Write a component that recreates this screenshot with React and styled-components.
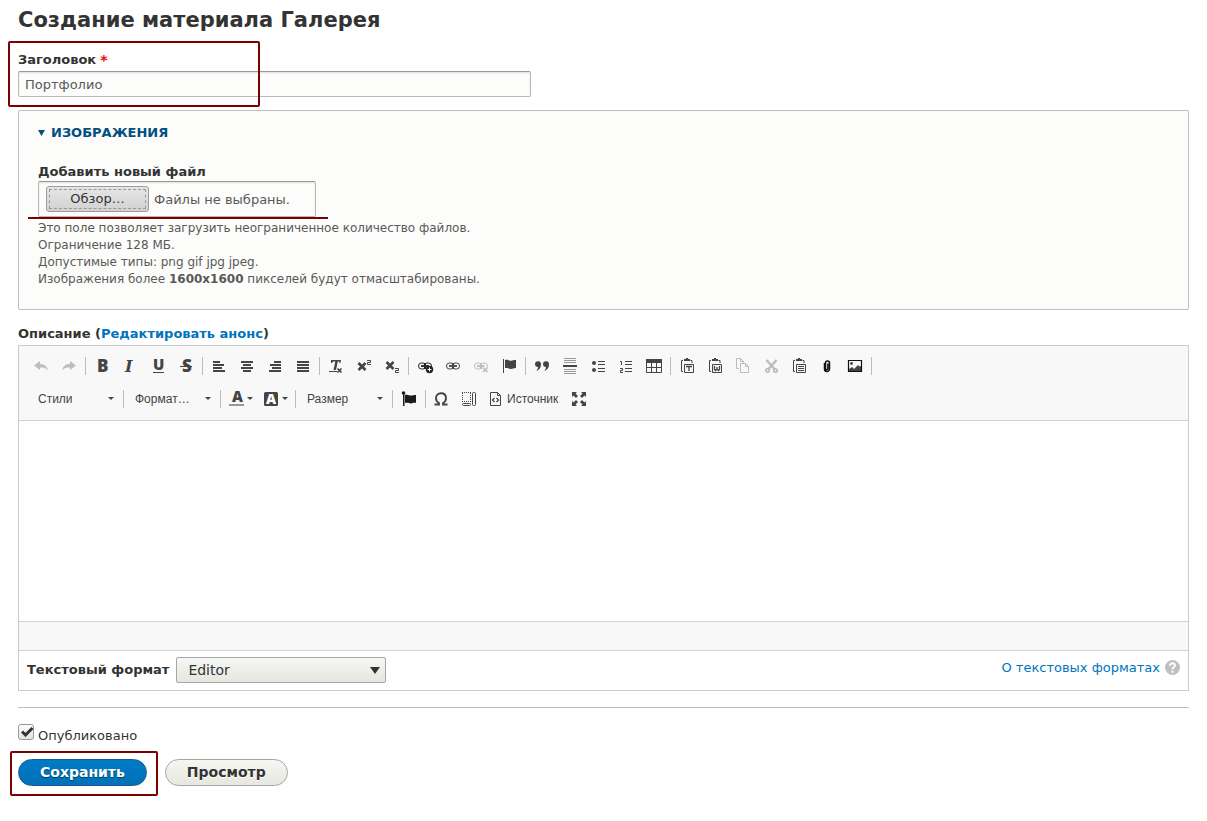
import React, { useState } from "react";
import styled, { createGlobalStyle, css } from "styled-components";

const GlobalStyle = createGlobalStyle`
  *,
  *::after {
    box-sizing: border-box;
  }

  body {
    margin: 0;
    background: #fff;
    color: #333;
    font-family: "DejaVu Sans", sans-serif;
    font-size: 13px;
  }

  button, input, select, textarea {
    font-family: inherit;
  }
`;

// --- Page ---
const Page = styled.main`
  padding: 7px 18px 34px;
`;

const Title = styled.h1`
  margin: 0 0 26px;
  font-size: 21px;
  line-height: 26px;
`;

// dark red frame laid over the part of the form to look at
const mark = css`
  content: "";
  position: absolute;
  border: 2px solid #7b0000;
  border-radius: 2px;
  pointer-events: none;
`;

// --- Title field ---
const TitleField = styled.div`
  position: relative;
  margin-bottom: 13px;

  &::after {
    ${mark}
    top: -18px;
    left: -10px;
    width: 252px;
    height: 66px;
  }
`;

const Label = styled.label`
  display: block;
  width: fit-content;
  font-weight: bold;
  line-height: 18px;
`;

const TitleLabel = styled(Label)`
  display: flex;
  gap: 4px;
  height: 12px;
  line-height: 2px;
`;

const Required = styled.span`
  color: #e00;
  font-size: 14px;
`;

const TextInput = styled.input`
  display: block;
  width: 513px;
  max-width: 100%;
  height: 26px;
  padding: 0 6px;
  border: 1px solid #b8b8b8;
  border-top-color: #999;
  border-radius: 2px;
  background: #fcfcfa;
  box-shadow: inset 0 1px 2px rgba(0, 0, 0, 0.12);
  color: #595959;
  font-size: 13px;
`;

// --- Images ---
const Details = styled.details`
  padding: 12px 19px 21px;
  border: 1px solid #bfbfbf;
  border-radius: 2px;
  background: #fcfcfa;
`;

const Summary = styled.summary`
  display: flex;
  align-items: center;
  gap: 6px;
  margin-bottom: 20px;
  color: #004f80;
  font-weight: bold;
  line-height: 20px;
  text-transform: uppercase;
  cursor: pointer;

  svg {
    width: 7px;
    height: 6px;
    fill: currentColor;
  }
`;

const FileField = styled.div`
  position: relative;
  width: fit-content;

  &::after {
    ${mark}
    right: -12px;
    bottom: -2px;
    left: -10px;
    border-width: 2px 0 0;
    border-radius: 0;
  }
`;

const FileBox = styled.label`
  display: flex;
  align-items: center;
  gap: 5px;
  width: 278px;
  height: 36px;
  padding: 0 7px;
  border: 1px solid #b8b8b8;
  border-top-color: #999;
  border-radius: 2px;
  box-shadow: inset 0 1px 2px rgba(0, 0, 0, 0.12);
  color: #595959;

  input {
    position: absolute;
    opacity: 0;
    width: 1px;
  }
`;

const FileButton = styled.span`
  width: 103px;
  height: 26px;
  padding: 2px;
  border: 1px solid #9d9d9d;
  border-radius: 3px;
  background: linear-gradient(#e6e6e6, #d2d2d2);
  color: #333;
  line-height: 18px;
  text-align: center;

  span {
    display: block;
    border: 1px dashed #999;
  }
`;

const Description = styled.p`
  margin: 3px 0 0;
  color: #595959;
  font-size: 12px;
  line-height: 17px;
`;

// --- Editor ---
const EditorLabel = styled.div`
  margin: 15px 0 2px;
  font-weight: bold;
  line-height: 18px;
`;

const Link = styled.a`
  color: #0074bd;
  text-decoration: none;
`;

const Editor = styled.section`
  border: 1px solid #ccc;
`;

const Toolbar = styled.div`
  padding: 3px 8px 5px;
  border-bottom: 1px solid #d1d1d1;
  background: #f8f8f8;
`;

const ToolRow = styled.div`
  display: flex;
  align-items: center;
  height: 33px;
  padding-left: ${({ $indent }) => ($indent ? "2px" : "0")};
`;

const Separator = styled.span`
  width: 1px;
  height: 18px;
  margin: 0 2px;
  background: #bcbcbc;
`;

const ToolButton = styled.button`
  display: flex;
  align-items: center;
  gap: 1px;
  height: 25px;
  padding: 0 ${({ $menu }) => ($menu ? "5px" : "6px")} 0 6px;
  border: 0;
  background: none;
  color: ${({ disabled }) => (disabled ? "#bdbdbd" : "#444")};
  font: 12px "Liberation Sans", Arial, sans-serif;
  cursor: pointer;
`;

const Combo = styled(ToolButton)`
  justify-content: space-between;
  width: 92px;
  padding: 0 7px 0 9px;
`;

const Icon = styled.svg`
  flex: none;
  width: 16px;
  height: 16px;
  fill: currentColor;
  overflow: visible;
`;

const Arrow = styled.span`
  margin-left: 1px;
  border: 3px solid transparent;
  border-top-color: #444;
  border-bottom: 0;
`;

const Content = styled.textarea`
  display: block;
  width: 100%;
  height: 200px;
  padding: 20px;
  border: 0;
  outline: 0;
  resize: none;
  font-size: 13px;
`;

const BottomBar = styled.div`
  height: 30px;
  border: solid #d1d1d1;
  border-width: 1px 0;
  background: #f8f8f8;
`;

const FormatRow = styled.div`
  display: flex;
  align-items: center;
  gap: 7px;
  padding: 6px 8px 7px;
`;

const SelectWrap = styled.div`
  position: relative;

  svg {
    position: absolute;
    top: 10px;
    right: 6px;
    width: 10px;
    height: 7px;
    fill: #333;
    pointer-events: none;
  }
`;

const Select = styled.select`
  display: block;
  appearance: none;
  width: 210px;
  height: 26px;
  padding: 0 24px 0 11px;
  border: 1px solid #a6a6a6;
  border-radius: 2px;
  background: linear-gradient(#f6f6f3, #e7e7df);
  color: #333;
  font-size: 14px;
`;

const HelpLink = styled(Link)`
  display: flex;
  align-items: center;
  gap: 5px;
  height: 20px;
  margin: 0 0 6px auto;

  svg {
    width: 15px;
    height: 15px;
  }
`;

// --- Actions ---
const Divider = styled.hr`
  height: 1px;
  margin: 16px 0;
  border: 0;
  background: #bfbfbf;
`;

const CheckRow = styled.label`
  display: flex;
  align-items: flex-start;
  gap: 4px;
  position: relative;
  width: fit-content;
  line-height: 24px;

  input {
    appearance: none;
    width: 16px;
    height: 16px;
    margin: 0;
    border: 1px solid #999;
    border-radius: 3px;
    background: linear-gradient(#fff, #e2e2e2);
  }

  svg {
    position: absolute;
    top: 2px;
    left: 3px;
    width: 13px;
    height: 11px;
    visibility: hidden;
  }

  input:checked + svg {
    visibility: visible;
  }
`;

const Actions = styled.div`
  display: flex;
  gap: 18px;
  margin-top: 11px;
`;

const SaveMark = styled.div`
  position: relative;

  &::after {
    ${mark}
    top: -8px;
    right: -11px;
    bottom: -10px;
    left: -8px;
  }
`;

const Button = styled.button`
  display: block;
  height: 27px;
  padding: 0 21px 2px;
  border: 1px solid ${({ $primary }) => ($primary ? "#1e5c90" : "#a6a6a6")};
  border-radius: 14px;
  background: ${({ $primary }) =>
    $primary
      ? "linear-gradient(#007bc6, #0071b8)"
      : "linear-gradient(#f6f6f3, #e7e7df)"};
  color: ${({ $primary }) => ($primary ? "#fff" : "#333")};
  text-shadow: ${({ $primary }) =>
    $primary ? "0 1px 1px rgba(0, 0, 0, 0.5)" : "0 1px #fff"};
  font-size: 14px;
  font-weight: bold;
  cursor: pointer;
`;

// --- Toolbar drawings, each in a 16 x 16 box ---
const sans = { fontFamily: "Open Sans, sans-serif", fontWeight: 800 };
const line = { fill: "none", stroke: "currentColor" };

const bars = (rows) => rows.map(([x, w], i) => <rect key={i} x={x} y={3 + i * 3} width={w} height="2" />);

const chain = (
  <>
    <rect x="1.5" y="5" width="7.500" height="6" rx="3" {...line} />
    <rect x="7" y="5" width="7.500" height="6" rx="3" {...line} />
    <path d="M4 8h8" {...line} strokeWidth="1.800" />
  </>
);

const clipboard = (
  <>
    <path d="M4 2.500H2.500v11H4M11.500 2.500h1.500V5" {...line} />
    <path d="M5 3V1h2V0h2v1h2v2z" />
    <path d="M5.500 6.500h9v8h-9z" {...line} />
  </>
);

const icons = {
  undo: <path d="M1 7.500 7 3v3c4 0 7 2 8 6.500-2-2.500-4.500-3-8-3v2.500z" />,
  redo: <path d="M15 7.500 9 3v3c-4 0-7 2-8 6.500 2-2.500 4.500-3 8-3v2.500z" />,
  bold: <text x="3" y="14" fontSize="17" {...sans}>B</text>,
  italic: <text x="3" y="14" fontSize="16" fontFamily="DejaVu Serif, serif" fontStyle="italic" fontWeight="700">I</text>,
  underline: (
    <>
      <text x="3" y="12" fontSize="15" {...sans}>U</text>
      <path d="M3 14h11v1H3z" />
    </>
  ),
  strike: (
    <>
      <text x="4" y="14" fontSize="17" {...sans}>S</text>
      <path d="M2 8h12v1H2z" />
    </>
  ),
  left: bars([[2, 7], [2, 11], [2, 9], [2, 12]]),
  center: bars([[2, 12], [4, 8], [2, 12], [4, 8]]),
  right: bars([[7, 7], [3, 11], [5, 9], [2, 12]]),
  justify: bars([[2, 12], [2, 12], [2, 12], [2, 12]]),
  clear: (
    <>
      <path d="M3 2h10l-.5 3h-1l-.2-1.500H9.800L8 12H5.500l1.800-8.500H5L4 5H3zM1 13h8v1H1z" />
      <path d="m9.500 10.500 4 4m0-4-4 4" {...line} strokeWidth="1.700" />
    </>
  ),
  sup: (
    <>
      <path d="m2.500 5 7 7m0-7-7 7" {...line} strokeWidth="2.600" />
      <path d="M11 2.500h3.500v2h-3v2H15" {...line} />
    </>
  ),
  sub: (
    <>
      <path d="m2.500 4 7 7m0-7-7 7" {...line} strokeWidth="2.600" />
      <path d="M11 10.500h3.500v2h-3v2H15" {...line} />
    </>
  ),
  linkAdd: (
    <g color="#222">
      {chain}
      <circle cx="12.500" cy="11.500" r="3.700" />
      <path d="M12.500 9.500v4M10.500 11.500h4" stroke="#fff" />
    </g>
  ),
  link: chain,
  unlink: (
    <>
      {chain}
      <path d="m10 9.500 5 5m0-5-5 5" stroke="#f8f8f8" strokeWidth="4" />
      <path d="m10 9.500 4.500 4.500m0-4.500L10 14" {...line} strokeWidth="1.700" />
    </>
  ),
  flag: <path d="M2 1h1v14H2zM4 2c3-1 4 1 6 .7 2-.4 2-.7 5-.7v8c-3 0-3 .8-5 1-2-.1-3-1.500-6-1z" />,
  quote: (
    <path d="M1 6a3 3 0 1 1 6 .5C7 10 5 12 2 13c1.500-1.500 2-2.500 2-4a3 3 0 0 1-3-3zM9 6a3 3 0 1 1 6 .5c0 3.500-2 5.500-5 6.500 1.500-1.500 2-2.500 2-4a3 3 0 0 1-3-3z" />
  ),
  rule: (
    <>
      <path d="M2 .5h12M2 2.500h12M2 4.500h12M2 11.500h12M2 13.500h12M2 15.500h12" stroke="#999" />
      <path d="M1 7h14v2H1z" />
    </>
  ),
  bullets: (
    <>
      <circle cx="4" cy="5" r="2" />
      <circle cx="4" cy="12" r="2" />
      <path d="M8 3.500h7M8 6.500h7M8 10.500h7M8 13.500h7" {...line} />
    </>
  ),
  numbers: (
    <>
      <path d="M7 3.500h7M7 6.500h7M7 10.500h7M7 13.500h7" {...line} />
      <path d="M2 3.500h1.500V7M2 10.500h2.500v2h-2v2H5" {...line} />
    </>
  ),
  table: (
    <>
      <path d="M0 1h16v4H0z" />
      <path d="M.5 4v10.500h15V4M5.500 4v10M10.500 4v10M0 9.500h16" {...line} />
    </>
  ),
  pasteText: (
    <>
      {clipboard}
      <path d="M7 8.500h6M10 8v5" {...line} strokeWidth="1.300" />
    </>
  ),
  pasteWord: (
    <>
      {clipboard}
      <path d="M7.500 8v3.500l1 1 1.500-1.500 1.500 1.500 1-1V8M10 9v2.500" {...line} strokeWidth="1.300" />
    </>
  ),
  copy: <path d="M4 10.500H1.500v-10h4l3 3V5M5.500.5v3h3M5.500 5.500h5l3 3v6h-8zM10.500 5.500v3h3" {...line} />,
  cut: (
    <>
      <path d="m3.500 2 8 9M13.500 2l-8 9" {...line} strokeWidth="2.400" />
      <circle cx="4.500" cy="12.500" r="1.700" {...line} strokeWidth="1.700" />
      <circle cx="12.500" cy="12.500" r="1.700" {...line} strokeWidth="1.700" />
    </>
  ),
  paste: (
    <>
      {clipboard}
      <path d="M7 8.500h6M7 10.500h6M7 12.500h6" {...line} />
    </>
  ),
  attach: (
    <path d="M5.500 5v6a2.500 2.500 0 0 0 5 0V5a2 2 0 0 0-4 0v5.500a1.200 1.200 0 0 0 2.400 0V5.500" {...line} stroke="#111" strokeWidth="1.500" />
  ),
  image: (
    <>
      <path d="M1.500 2.500h13v11h-13z" {...line} stroke="#111" strokeWidth="1.200" />
      <circle cx="4.500" cy="5.500" r="1.400" />
      <path d="M2 13v-2l3-2 2 2 4-4 1.500 1.500L14 8v5z" />
    </>
  ),
  textColor: (
    <>
      <text x="3" y="11" fontSize="15" {...sans}>A</text>
      <path d="M0 13h15v2H0z" fill="#999" />
    </>
  ),
  bgColor: (
    <>
      <rect x="0" y="1" width="14" height="14" rx="1.500" />
      <text x="2" y="13" fontSize="14" fill="#fff" {...sans}>A</text>
    </>
  ),
  anchor: (
    <g fill="#1b1b1b">
      <circle cx="2.500" cy="2" r="1.800" />
      <path d="M2 2h1.500v13H2zM4 4c3-1 4 .5 6 .5s2-.5 5-.5v8c-3-.500-3 .5-5 .5S7 11.500 4 12z" />
    </g>
  ),
  omega: (
    <path d="M.5 13.500H5v-1.500C3 11 2 9.500 2 7.300 2 4 4 2.300 7 2.300s5 1.700 5 5c0 2.200-1 3.700-3 4.700v1.500h4.500" {...line} strokeWidth="1.900" />
  ),
  blocks: (
    <>
      <path d="M0 1.500h9M0 10.500h9M.5 2v9M8.500 2v9" {...line} strokeDasharray="1 1" />
      <rect x="10.500" y="1.500" width="3" height="13" rx="1" {...line} />
      <rect x=".5" y="12.500" width="8" height="2" rx="1" {...line} />
    </>
  ),
  source: (
    <>
      <path d="M.5 1.500h7l3 3v10H.5zM7.500 1.500v3h3" {...line} />
      <path d="M4.500 7 2.500 9l2 2M6.500 7l2 2-2 2" {...line} strokeWidth="1.300" />
    </>
  ),
  maximize: (
    <path d="M2 1h5L5.500 2.500 8 5 6 7 3.500 4.500 2 6zM16 1v5l-1.500-1.500L12 7l-2-2 2.500-2.500L11 1zM2 15v-5l1.500 1.500L6 9l2 2-2.500 2.500L7 15zM16 15h-5l1.500-1.500L10 11l2-2 2.500 2.500L16 10z" />
  ),
};

const topGroups = [
  [["undo", "Отменить", true], ["redo", "Повторить", true]],
  [["bold", "Полужирный"], ["italic", "Курсив"], ["underline", "Подчеркнутый"], ["strike", "Зачеркнутый"]],
  [["left", "По левому краю"], ["center", "По центру"], ["right", "По правому краю"], ["justify", "По ширине"]],
  [["clear", "Убрать форматирование"], ["sup", "Надстрочный индекс"], ["sub", "Подстрочный индекс"]],
  [["linkAdd", "Добавить ссылку"], ["link", "Ссылка"], ["unlink", "Убрать ссылку", true], ["flag", "Якорь"]],
  [["quote", "Цитата"], ["rule", "Горизонтальная линия"], ["bullets", "Маркированный список"], ["numbers", "Нумерованный список"], ["table", "Таблица"]],
  [
    ["pasteText", "Вставить только текст"],
    ["pasteWord", "Вставить из Word"],
    ["copy", "Копировать", true],
    ["cut", "Вырезать", true],
    ["paste", "Вставить"],
    ["attach", "Файл"],
    ["image", "Изображение"],
  ],
];

const Tool = ({ name, title, disabled, menu, children }) => (
  <ToolButton type="button" title={title} aria-label={title} disabled={disabled} $menu={menu}>
    <Icon viewBox="0 0 16 16" aria-hidden="true">
      {icons[name]}
    </Icon>
    {children}
    {menu && <Arrow />}
  </ToolButton>
);

const ComboBox = ({ children }) => (
  <Combo type="button">
    {children}
    <Arrow />
  </Combo>
);

const EditorToolbar = () => (
  <Toolbar role="toolbar" aria-label="Панель редактора">
    <ToolRow>
      {topGroups.map((group, i) => (
        <React.Fragment key={i}>
          {group.map(([name, title, disabled]) => (
            <Tool key={name} name={name} title={title} disabled={disabled} />
          ))}
          <Separator />
        </React.Fragment>
      ))}
    </ToolRow>
    <ToolRow $indent>
      <ComboBox>Стили</ComboBox>
      <Separator />
      <ComboBox>Формат…</ComboBox>
      <Separator />
      <Tool name="textColor" title="Цвет текста" menu />
      <Tool name="bgColor" title="Цвет фона" menu />
      <Separator />
      <ComboBox>Размер</ComboBox>
      <Separator />
      <Tool name="anchor" title="Вставить якорь" />
      <Separator />
      <Tool name="omega" title="Специальный символ" />
      <Tool name="blocks" title="Отображать блоки" />
      <Tool name="source">Источник</Tool>
      <Tool name="maximize" title="Развернуть" />
    </ToolRow>
  </Toolbar>
);

// --- Rendering Function ---
const App = () => {
  const [title, setTitle] = useState("Портфолио");
  const [body, setBody] = useState("");
  const [published, setPublished] = useState(true);

  const submitHandler = (e) => {
    e.preventDefault();
  };

  return (
    <Page>
      <GlobalStyle />
      <Title>Создание материала Галерея</Title>
      <form onSubmit={submitHandler}>
        <TitleField>
          <TitleLabel htmlFor="title">
            Заголовок <Required>*</Required>
          </TitleLabel>
          <TextInput id="title" type="text" value={title} onChange={(e) => setTitle(e.target.value)} />
        </TitleField>

        <Details open>
          <Summary>
            <svg viewBox="0 0 7 6" aria-hidden="true">
              <path d="M0 0h7L3.500 6z" />
            </svg>
            Изображения
          </Summary>
          <Label htmlFor="files">Добавить новый файл</Label>
          <FileField>
            <FileBox>
              <input id="files" type="file" multiple />
              <FileButton>
                <span>Обзор…</span>
              </FileButton>
              Файлы не выбраны.
            </FileBox>
          </FileField>
          <Description>
            Это поле позволяет загрузить неограниченное количество файлов.
            <br />
            Ограничение 128 МБ.
            <br />
            Допустимые типы: png gif jpg jpeg.
            <br />
            Изображения более <strong>1600x1600</strong> пикселей будут отмасштабированы.
          </Description>
        </Details>

        <EditorLabel>
          <label htmlFor="body">Описание</label> (<Link href="#summary">Редактировать анонс</Link>)
        </EditorLabel>
        <Editor>
          <EditorToolbar />
          <Content id="body" value={body} onChange={(e) => setBody(e.target.value)} />
          <BottomBar />
          <FormatRow>
            <Label htmlFor="format">Текстовый формат</Label>
            <SelectWrap>
              <Select id="format" defaultValue="editor">
                <option value="editor">Editor</option>
              </Select>
              <svg viewBox="0 0 10 7" aria-hidden="true">
                <path d="M0 0h10L5 7z" />
              </svg>
            </SelectWrap>
            <HelpLink href="#formats">
              О текстовых форматах
              <svg viewBox="0 0 15 15" aria-hidden="true">
                <circle cx="7.500" cy="7.500" r="7.500" fill="#bfbfbf" />
                <path d="M5 5.800c0-3.500 5-3.300 5-.3 0 2-2.500 1.700-2.500 4" fill="none" stroke="#fff" strokeWidth="1.900" />
                <path d="M6.500 10.800h2v2h-2z" fill="#fff" />
              </svg>
            </HelpLink>
          </FormatRow>
        </Editor>

        <Divider />

        <CheckRow>
          <input type="checkbox" checked={published} onChange={(e) => setPublished(e.target.checked)} />
          <svg viewBox="0 0 13 11" aria-hidden="true">
            <path d="M1 5.500 4.500 9l7-7" fill="none" stroke="#333" strokeWidth="3" />
          </svg>
          Опубликовано
        </CheckRow>
        <Actions>
          <SaveMark>
            <Button type="submit" $primary>
              Сохранить
            </Button>
          </SaveMark>
          <Button type="button">Просмотр</Button>
        </Actions>
      </form>
    </Page>
  );
};

export default App;
